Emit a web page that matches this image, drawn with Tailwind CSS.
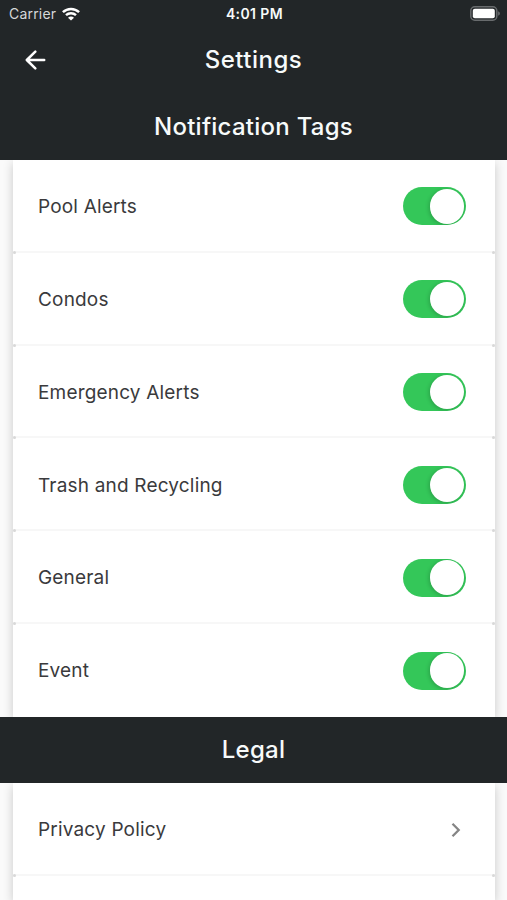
<!DOCTYPE html>
<html lang="en">
<head>
<meta charset="utf-8">
<title>Settings</title>
<script src="https://cdn.jsdelivr.net/npm/@tailwindcss/browser@4"></script>
</head>
<body class="flex h-[900px] w-[507px] flex-col overflow-hidden bg-[#fafafa] font-['Inter','Liberation_Sans',sans-serif] text-[#3a3a3c]">
<header class="relative z-10 flex h-[160px] shrink-0 flex-col bg-[#222628] text-[#f7fafa]">
  <div class="grid h-[28px] grid-cols-3 items-center pr-[7px] pl-[9px]">
    <div class="flex items-center gap-[6px]">
      <span class="text-[14px] leading-none tracking-[0.2px] text-[#d5d8d9]">Carrier</span>
      <svg width="18" height="14" viewBox="0 0 18 14" fill="none" stroke="#fff" stroke-width="2.5"><path d="M.9 5.1C5.5.8 12.5.8 17.1 5.1M4 8.2c2.8-2.6 7.2-2.6 10 0"/><path d="M9 13.6 6 10.7c1.7-1.5 4.3-1.5 6 0Z" fill="#fff" stroke="none"/></svg>
    </div>
    <span class="text-center text-[14px] leading-none font-semibold tracking-[0.4px] whitespace-nowrap">4:01 PM</span>
    <svg class="justify-self-end" width="31" height="16" viewBox="0 0 31 16"><rect x="1.8" y=".8" width="26" height="13.4" rx="4" fill="none" stroke="#686b6d" stroke-width="1.5"/><rect x="3.8" y="2.8" width="22" height="9.4" rx="2" fill="#fff"/><path d="M29.1 5.3c2.4.8 2.4 3.5 0 4.4Z" fill="#686b6d"/></svg>
  </div>
  <div class="grid h-[64px] grid-cols-3 items-center px-[25px]">
    <svg width="21" height="20" viewBox="0 0 21 20" fill="none" stroke="#fff" stroke-width="2.5" stroke-linecap="round" stroke-linejoin="round"><path d="M10.3 1.7 1.8 10l8.5 8.3M2 10h17.2"/></svg>
    <h1 class="text-center text-[24px] leading-none font-medium tracking-[0.5px]">Settings</h1>
  </div>
  <h2 class="flex h-[68px] items-center justify-center pt-[2px] text-[24px] leading-none font-medium tracking-[0.25px]">Notification Tags</h2>
</header>
<ul class="mr-[12px] ml-[13px] h-[557px] shrink-0 bg-white text-[19px] tracking-[0.18px] shadow-[0_3px_10px_rgba(0,0,0,0.2)]" id="tags"></ul>
<h2 class="relative z-10 flex h-[66px] shrink-0 items-center justify-center bg-[#222628] text-[24px] leading-none font-medium tracking-[0.3px] text-[#f7fafa]">Legal</h2>
<ul class="mr-[12px] ml-[13px] h-[117px] shrink-0 bg-white text-[19px] tracking-[0.18px] shadow-[0_3px_10px_rgba(0,0,0,0.2)]">
  <li class="relative flex h-[93px] items-center justify-between border-b-2 border-[#f7f7f7] pt-[2px] pr-[34px] pl-[25px] before:absolute before:-bottom-[3px] before:left-0 before:size-[3px] before:rounded-full before:bg-[#d8d8d8] after:absolute after:right-0 after:-bottom-[3px] after:size-[3px] after:rounded-full after:bg-[#d8d8d8]">
    <span class="pt-[2px]">Privacy Policy</span>
    <svg width="10" height="16" viewBox="0 0 10 16" fill="none" stroke="#858585" stroke-width="2.3"><path d="m1.5 1.8 6.2 6.2-6.2 6.2"/></svg>
  </li>
</ul>
<template id="row">
  <li class="relative flex h-[92.83px] items-center justify-between border-b-2 border-[#f7f7f7] pt-[2px] pr-[29px] pl-[25px] before:absolute before:-bottom-[3px] before:left-0 before:size-[3px] before:rounded-full before:bg-[#d8d8d8] after:absolute after:right-0 after:-bottom-[3px] after:size-[3px] after:rounded-full after:bg-[#d8d8d8] last:border-transparent last:before:hidden last:after:hidden">
    <span class="pt-[2px]"></span>
    <div role="switch" aria-checked="true" class="flex h-[38px] w-[63px] items-center justify-end overflow-hidden rounded-full bg-[#34c759] pr-[2px]"><div class="size-[34.5px] rounded-full bg-white shadow-[-1px_1px_4px_rgba(0,0,0,0.2)]"></div></div>
  </li>
</template>
<script>
const list = document.getElementById('tags');
const row = document.getElementById('row');
for (const label of ['Pool Alerts', 'Condos', 'Emergency Alerts', 'Trash and Recycling', 'General', 'Event']) {
  const item = row.content.cloneNode(true);
  item.querySelector('span').textContent = label;
  list.append(item);
}
</script>
</body>
</html>
